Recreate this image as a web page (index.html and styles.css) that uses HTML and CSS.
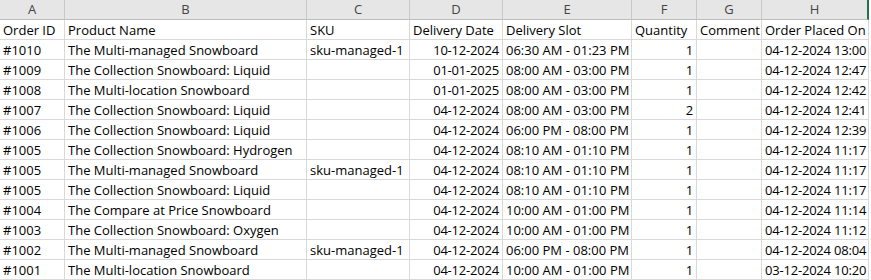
FILE: index.html
```html
<!DOCTYPE html>
<html lang="en">
<head>
<meta charset="utf-8">
<title>Orders</title>
<link rel="stylesheet" href="styles.css">
</head>
<body>
<div class="sheet">
  <div class="hd">A</div><div class="hd">B</div><div class="hd">C</div><div class="hd">D</div><div class="hd">E</div><div class="hd">F</div><div class="hd">G</div><div class="hd hd-sel">H</div>

  <div class="c">Order ID</div><div class="c">Product Name</div><div class="c">SKU</div><div class="c">Delivery Date</div><div class="c">Delivery Slot</div><div class="c">Quantity</div><div class="c">Comment</div><div class="c">Order Placed On</div>

  <div class="c">#1010</div><div class="c">The Multi-managed Snowboard</div><div class="c">sku-managed-1</div><div class="c r">10-12-2024</div><div class="c">06:30 AM - 01:23 PM</div><div class="c r">1</div><div class="c"></div><div class="c r">04-12-2024 13:00</div>

  <div class="c">#1009</div><div class="c">The Collection Snowboard: Liquid</div><div class="c"></div><div class="c r">01-01-2025</div><div class="c">08:00 AM - 03:00 PM</div><div class="c r">1</div><div class="c"></div><div class="c r">04-12-2024 12:47</div>

  <div class="c">#1008</div><div class="c">The Multi-location Snowboard</div><div class="c"></div><div class="c r">01-01-2025</div><div class="c">08:00 AM - 03:00 PM</div><div class="c r">1</div><div class="c"></div><div class="c r">04-12-2024 12:42</div>

  <div class="c">#1007</div><div class="c">The Collection Snowboard: Liquid</div><div class="c"></div><div class="c r">04-12-2024</div><div class="c">08:00 AM - 03:00 PM</div><div class="c r">2</div><div class="c"></div><div class="c r">04-12-2024 12:41</div>

  <div class="c">#1006</div><div class="c">The Collection Snowboard: Liquid</div><div class="c"></div><div class="c r">04-12-2024</div><div class="c">06:00 PM - 08:00 PM</div><div class="c r">1</div><div class="c"></div><div class="c r">04-12-2024 12:39</div>

  <div class="c">#1005</div><div class="c">The Collection Snowboard: Hydrogen</div><div class="c"></div><div class="c r">04-12-2024</div><div class="c">08:10 AM - 01:10 PM</div><div class="c r">1</div><div class="c"></div><div class="c r">04-12-2024 11:17</div>

  <div class="c">#1005</div><div class="c">The Multi-managed Snowboard</div><div class="c">sku-managed-1</div><div class="c r">04-12-2024</div><div class="c">08:10 AM - 01:10 PM</div><div class="c r">1</div><div class="c"></div><div class="c r">04-12-2024 11:17</div>

  <div class="c">#1005</div><div class="c">The Collection Snowboard: Liquid</div><div class="c"></div><div class="c r">04-12-2024</div><div class="c">08:10 AM - 01:10 PM</div><div class="c r">1</div><div class="c"></div><div class="c r">04-12-2024 11:17</div>

  <div class="c">#1004</div><div class="c">The Compare at Price Snowboard</div><div class="c"></div><div class="c r">04-12-2024</div><div class="c">10:00 AM - 01:00 PM</div><div class="c r">1</div><div class="c"></div><div class="c r">04-12-2024 11:14</div>

  <div class="c">#1003</div><div class="c">The Collection Snowboard: Oxygen</div><div class="c"></div><div class="c r">04-12-2024</div><div class="c">10:00 AM - 01:00 PM</div><div class="c r">1</div><div class="c"></div><div class="c r">04-12-2024 11:12</div>

  <div class="c">#1002</div><div class="c">The Multi-managed Snowboard</div><div class="c">sku-managed-1</div><div class="c r">04-12-2024</div><div class="c">06:00 PM - 08:00 PM</div><div class="c r">1</div><div class="c"></div><div class="c r">04-12-2024 08:04</div>

  <div class="c">#1001</div><div class="c">The Multi-location Snowboard</div><div class="c"></div><div class="c r">04-12-2024</div><div class="c">10:00 AM - 01:00 PM</div><div class="c r">1</div><div class="c"></div><div class="c r">03-12-2024 10:20</div>
</div>
</body>
</html>
```
FILE: styles.css
```css
html, body {
  margin: 0;
  padding: 0;
  background: #ffffff;
}

.sheet {
  display: grid;
  grid-template-columns: 65px 242px 103px 93px 129px 65px 65px 107px;
  grid-auto-rows: 20px;
  font-family: "Open Sans", Lato, sans-serif;
  font-size: 13px;
  color: #000;
}

.hd {
  box-sizing: border-box;
  background: #e6e6e6;
  border-right: 1px solid #c9c9c9;
  border-bottom: 1px solid #bdbdbd;
  color: #444;
  text-align: center;
  line-height: 19px;
}

.hd-sel {
  border-right: 2px solid #217346;
}

.c {
  box-sizing: border-box;
  border-right: 1px solid #d9d9d9;
  border-bottom: 1px solid #d9d9d9;
  padding: 0 3px 0 3px;
  line-height: 20px;
  white-space: nowrap;
  overflow: visible;
}

.r {
  text-align: right;
  letter-spacing: -0.2px;
}
```
